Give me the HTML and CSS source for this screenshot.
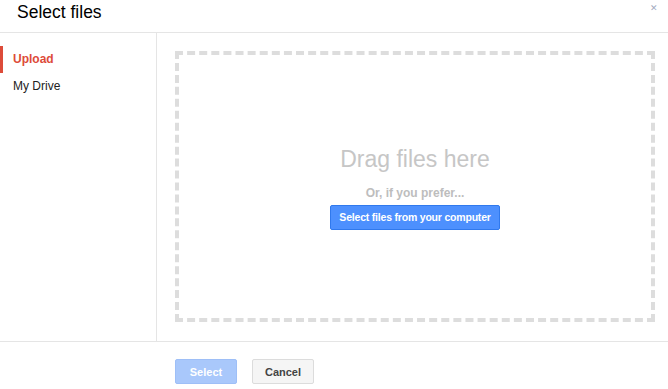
FILE: index.html
```html
<!DOCTYPE html>
<html lang="en">
<head>
    <meta charset="UTF-8">
    <title>Select files</title>
    <link rel="stylesheet" href="styles.css">
</head>
<body>
    <div class="picker">
        <div class="picker-header">
            <h1>Select files</h1>
            <span class="close">&#10005;</span>
        </div>

        <div class="picker-body">
            <div class="sidebar">
                <a href="#" class="nav-item active">Upload</a>
                <a href="#" class="nav-item">My Drive</a>
            </div>

            <div class="content">
                <div class="drop-zone">
                    <div class="drop-title">Drag files here</div>
                    <div class="drop-hint">Or, if you prefer...</div>
                    <button type="button" class="button button-blue">Select files from your computer</button>
                </div>
            </div>
        </div>

        <div class="picker-footer">
            <button type="button" class="button button-disabled">Select</button>
            <button type="button" class="button button-grey">Cancel</button>
        </div>
    </div>
</body>
</html>
```

FILE: styles.css
```css
body {
    margin: 0;
    font-family: "Liberation Sans", Arial, sans-serif;
    color: #222;
    background: #fff;
}
.picker {
    width: 668px;
    height: 389px;
    display: flex;
    flex-direction: column;
}
.picker-header {
    height: 32px;
    border-bottom: 1px solid #e5e5e5;
    display: flex;
    align-items: flex-start;
    justify-content: space-between;
}
.picker-header h1 {
    margin: 0;
    padding: 2px 0 0 17px;
    font-size: 17.5px;
    font-weight: normal;
    color: #000;
}
.close {
    margin: 3px 10px 0 0;
    font-size: 9px;
    color: #a3abc0;
}
.picker-body {
    display: flex;
    height: 308px;
}
.sidebar {
    width: 156px;
    border-right: 1px solid #e5e5e5;
    padding-top: 13px;
}
.nav-item {
    display: block;
    height: 27px;
    line-height: 27px;
    padding-left: 13px;
    border-left: 3px solid transparent;
    margin-left: -3px;
    font-size: 12px;
    color: #222;
    text-decoration: none;
}
.nav-item.active {
    margin-left: 0;
    padding-left: 10px;
    border-left-color: #dd4b39;
    color: #dd4b39;
    font-weight: bold;
}
.content {
    flex: 1;
    display: flex;
    padding: 18px 13px 19px 18px;
}
.drop-zone {
    flex: 1;
    border: 4px dashed #dddddd;
    display: flex;
    flex-direction: column;
    align-items: center;
    justify-content: center;
    padding-top: 2px;
}
.drop-title {
    font-size: 23px;
    color: #c6c6c6;
    margin-bottom: 13px;
}
.drop-hint {
    font-size: 12px;
    font-weight: bold;
    color: #bdbdbd;
    margin-bottom: 5px;
}
.button {
    height: 25px;
    padding: 0 8px;
    border-radius: 2px;
    font-family: inherit;
    font-size: 11px;
    font-weight: bold;
    cursor: default;
}
.button-blue {
    background-color: #4d90fe;
    border: 1px solid #3079ed;
    color: #fff;
    font-size: 10.5px;
    letter-spacing: -0.2px;
}
.picker-footer {
    flex: 1;
    border-top: 1px solid #e5e5e5;
    padding: 17px 0 0 175px;
    display: flex;
    align-items: flex-start;
    gap: 15px;
}
.picker-footer .button {
    width: 62px;
}
.button-disabled {
    background-color: #a9c8fb;
    border: 1px solid #9ebff7;
    color: #fff;
}
.button-grey {
    background-color: #f5f5f5;
    border: 1px solid #dcdcdc;
    color: #444;
}
```
